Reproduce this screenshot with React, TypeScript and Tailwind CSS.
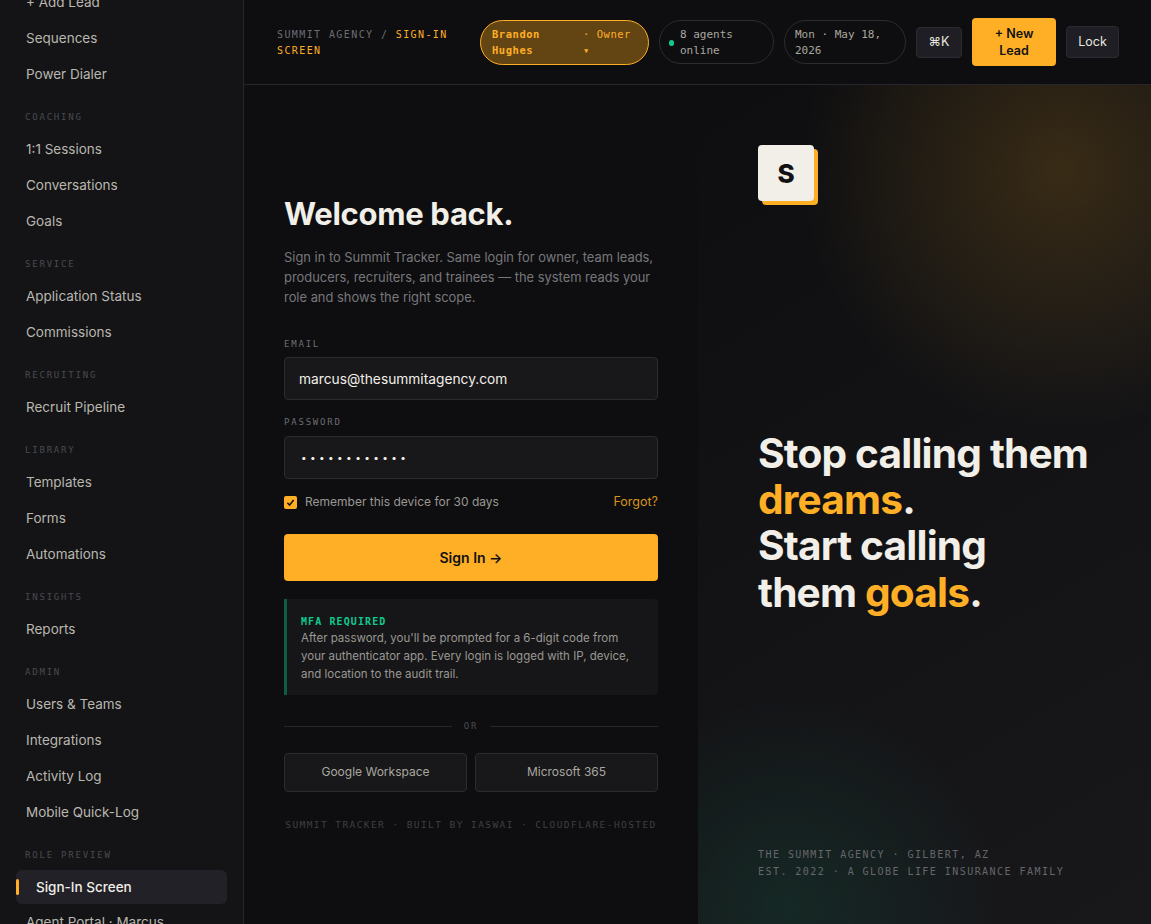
const sans = "font-['Inter','Noto_Sans',sans-serif]";
const mono = "font-['DejaVu_Sans_Mono','Liberation_Mono',monospace]";

const sections = [
  { label: null, items: ["+ Add Lead", "Sequences", "Power Dialer"] },
  { label: "COACHING", items: ["1:1 Sessions", "Conversations", "Goals"] },
  { label: "SERVICE", items: ["Application Status", "Commissions"] },
  { label: "RECRUITING", items: ["Recruit Pipeline"] },
  { label: "LIBRARY", items: ["Templates", "Forms", "Automations"] },
  { label: "INSIGHTS", items: ["Reports"] },
  { label: "ADMIN", items: ["Users & Teams", "Integrations", "Activity Log", "Mobile Quick-Log"] },
];

function NavItem({ label }: { label: string }) {
  return (
    <div className="h-9 pb-[2px] flex items-center px-[10px] text-[13.5px] text-[#b9b7b0] whitespace-nowrap">
      {label}
    </div>
  );
}

function SectionLabel({ label }: { label: string }) {
  return (
    <div className={`${mono} pl-[9px] mt-[11px] h-[28px] flex items-center text-[9px] tracking-[0.2em] text-[#4a4a50]`}>
      {label}
    </div>
  );
}

function Sidebar() {
  return (
    <aside className="w-[244px] shrink-0 h-full overflow-hidden bg-[#141416] border-r border-[#26262c] px-4">
      <div className="-mt-[15px]">
        {sections.map((s, i) => (
          <div key={i}>
            {s.label ? <SectionLabel label={s.label} /> : null}
            {s.items.map((item) => (
              <NavItem key={item} label={item} />
            ))}
          </div>
        ))}
        <SectionLabel label="ROLE PREVIEW" />
        <div className="relative h-[34px] flex items-center pl-5 rounded-md bg-[#212127] text-[13.5px] font-medium text-[#f1efe7]">
          <span className="absolute left-0 top-[9px] h-4 w-[3px] rounded-sm bg-[#ffaf26]" />
          Sign-In Screen
        </div>
        <div className="mt-[1px]">
          <NavItem label="Agent Portal · Marcus" />
        </div>
      </div>
    </aside>
  );
}

function Pill({ children, className }: { children: React.ReactNode; className: string }) {
  return (
    <div className={`${mono} h-[44px] pt-[1px] shrink-0 flex items-center rounded-full border border-[#2b2b32] text-[11px] leading-4 text-[#a9a79f] ${className}`}>
      {children}
    </div>
  );
}

function Topbar() {
  return (
    <header className="h-[85px] shrink-0 flex items-center pl-[33px] pr-8 gap-[10px] bg-[#0e0e10] border-b border-[#26262c]">
      <div className={`${mono} w-[193px] pr-5 mt-[2px] shrink-0 text-[10px] leading-4 tracking-[0.14em] text-[#6d6d72]`}>
        SUMMIT AGENCY / <span className="text-[#ffaf26]">SIGN-IN SCREEN</span>
      </div>
      <div className={`${mono} h-[45px] w-[169px] shrink-0 flex items-center gap-2 pl-[11px] rounded-full border border-[#ffaf26] bg-[#634413] text-[10.5px] leading-4 tracking-[0.05em] text-[#ffaf26]`}>
        <span className="w-[83px] font-bold">Brandon Hughes</span>
        <span className="w-[54px]">· Owner ▾</span>
      </div>
      <Pill className="w-[115px] pl-[9px] gap-[6px]">
        <span className="w-[5px] h-[6px] rounded-full bg-[#10c98f] shrink-0" />
        <span>8 agents online</span>
      </Pill>
      <Pill className="w-[122px] pl-[10px]">
        <span>Mon · May 18, 2026</span>
      </Pill>
      <div className="w-[46px] h-[31px] shrink-0 flex items-center justify-center rounded-[4px] border border-[#2b2b32] bg-[#1e1e24] text-[12.5px] text-[#e9e7df]">
        ⌘K
      </div>
      <div className="w-[84px] h-[48px] shrink-0 flex items-center justify-center px-4 text-center rounded-[4px] bg-[#ffaf26] text-[12.5px] leading-[17px] font-semibold text-[#111113]">
        + New Lead
      </div>
      <div className="w-[53px] h-[32px] shrink-0 flex items-center justify-center rounded-[4px] border border-[#2b2b32] bg-[#1e1e24] text-[12.5px] text-[#e9e7df]">
        Lock
      </div>
    </header>
  );
}

function Field({ label, value, dots }: { label: string; value: string; dots?: boolean }) {
  return (
    <div>
      <div className={`${mono} text-[9px] leading-[14px] tracking-[0.2em] text-[#6d6d72]`}>{label}</div>
      <div className={`${dots ? "mt-[7px] text-[10px] tracking-[3.4px] pl-[16px]" : "mt-[6px] text-[13.75px] pl-[14px] pt-[1px]"} h-[43px] flex items-center rounded-[4px] border border-[#2b2b32] bg-[#18181b] text-[#f1efe7]`}>
        {value}
      </div>
    </div>
  );
}

function SignInForm() {
  return (
    <section className="w-[454px] shrink-0 pl-10 pr-10 pt-[109px] bg-[#0e0e10]">
      <h1 className="text-[31px] leading-[40px] font-bold tracking-[-0.01em] text-[#f1efe7]">Welcome back.</h1>
      <p className="mt-[14px] text-[12.9px] leading-5 text-[#77777b]">
        Sign in to Summit Tracker. Same login for owner, team leads, producers, recruiters, and trainees — the system reads your role and shows the right scope.
      </p>
      <div className="mt-[29px]">
        <Field label="EMAIL" value="marcus@thesummitagency.com" />
      </div>
      <div className="mt-[15px]">
        <Field label="PASSWORD" value="••••••••••••" dots />
      </div>
      <div className="mt-[14px] h-[18px] flex items-center justify-between text-[12px]">
        <label className="flex items-center gap-[8px] text-[#9a9892]">
          <span className="w-[13px] h-[13px] rounded-[2px] bg-[#ffaf26] flex items-center justify-center">
            <svg width="9" height="9" viewBox="0 0 10 10" fill="none">
              <path d="M1.5 5.2 4 7.8 8.5 2.2" stroke="#1a1408" strokeWidth="1.7" />
            </svg>
          </span>
          Remember this device for 30 days
        </label>
        <span className="text-[12.5px] text-[#d8951f]">Forgot?</span>
      </div>
      <div className="mt-[23px] h-[47px] flex items-center justify-center rounded-[4px] bg-[#ffaf26] text-[14px] font-semibold text-[#111113]">
        Sign In →
      </div>
      <div className="mt-[18px] rounded-r-[4px] border-l-[3px] border-[#0f5c45] bg-[#161618] pl-[14px] pr-[24px] pt-[15px] pb-[12px]">
        <div className={`${mono} text-[10px] leading-[15px] font-bold tracking-[0.11em] text-[#10c98f]`}>MFA REQUIRED</div>
        <p className="text-[11.5px] leading-[18px] text-[#9a9892]">
          After password, you'll be prompted for a 6-digit code from your authenticator app. Every login is logged with IP, device, and location to the audit trail.
        </p>
      </div>
      <div className="mt-[25px] flex items-center gap-[12px]">
        <div className="flex-1 h-px bg-[#26262c]" />
        <span className={`${mono} text-[9px] tracking-[0.2em] text-[#4a4a50]`}>OR</span>
        <div className="flex-1 h-px bg-[#26262c]" />
      </div>
      <div className="mt-[19px] grid grid-cols-2 gap-2">
        <div className="h-[39px] flex items-center justify-center rounded-[4px] border border-[#2b2b32] bg-[#18181b] text-[12px] text-[#a9a79f]">Google Workspace</div>
        <div className="h-[39px] flex items-center justify-center rounded-[4px] border border-[#2b2b32] bg-[#18181b] text-[12px] text-[#a9a79f]">Microsoft 365</div>
      </div>
      <div className={`${mono} mt-[26px] text-center text-[9.5px] leading-[14px] tracking-[0.15em] whitespace-nowrap text-[#3f3f45]`}>
        SUMMIT TRACKER · BUILT BY IASWAI · CLOUDFLARE-HOSTED
      </div>
    </section>
  );
}

function Pitch() {
  return (
    <section className="flex-1 flex flex-col pl-[60px] pr-10 pt-[60px] bg-[radial-gradient(circle_260px_at_80%_10%,rgba(255,175,38,0.17),transparent),radial-gradient(circle_210px_at_20%_98%,rgba(16,201,143,0.1),transparent),linear-gradient(150deg,#0e0e10,#18181b)]">
      <div className="w-[56px] h-[56px] flex items-center justify-center rounded-[4px] bg-[#f1efe7] shadow-[4px_4px_0_#ffaf26] text-[26px] font-extrabold text-[#111113]">
        S
      </div>
      <h2 className="mt-[230px] text-[40.6px] leading-[46.2px] font-bold tracking-[-0.02em] text-[#f1efe7]">
        Stop calling them <span className="text-[#ffaf26]">dreams</span>.<br />
        Start calling<br />
        them <span className="text-[#ffaf26]">goals</span>.
      </h2>
      <div className={`${mono} mt-auto mb-[44px] text-[10px] leading-[17px] tracking-[0.145em] whitespace-nowrap text-[#66666b]`}>
        THE SUMMIT AGENCY · GILBERT, AZ<br />
        EST. 2022 · A GLOBE LIFE INSURANCE FAMILY
      </div>
    </section>
  );
}

export default function App() {
  return (
    <div className={`${sans} h-screen flex overflow-hidden bg-[#0e0e10]`}>
      <Sidebar />
      <main className="flex-1 min-w-0 flex flex-col">
        <Topbar />
        <div className="flex-1 min-h-0 flex">
          <SignInForm />
          <Pitch />
        </div>
      </main>
    </div>
  );
}
